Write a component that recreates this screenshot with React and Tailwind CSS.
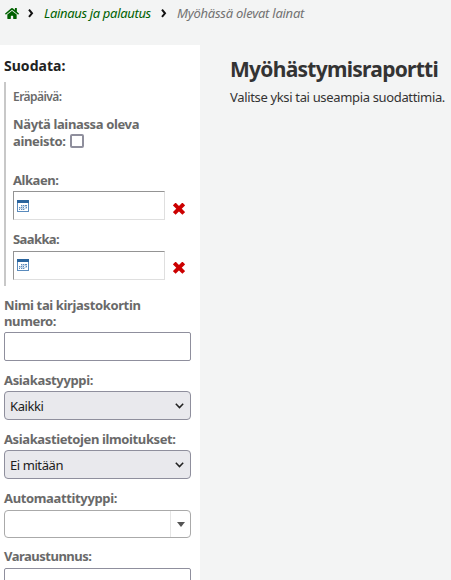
import React from "react";
import { FaHome } from "react-icons/fa";

function Crumb() {
  return (
    <svg className="h-[9px] w-[6px] shrink-0" viewBox="0 0 6 9">
      <path d="M1 .7 4 4.3 1 7.9" fill="none" stroke="#111" strokeWidth="2" />
    </svg>
  );
}

function CalendarIcon() {
  return (
    <svg className="h-3 w-3" viewBox="0 0 12 12" shapeRendering="crispEdges">
      <rect width="12" height="12" rx="1" fill="#5a8bbd" />
      <rect width="12" height="3" fill="#2a649d" />
      <rect x="1" y="3" width="10" height="8" fill="#fff" />
      <path d="M4 5h1v1H4zM6 5h1v1H6zM8 5h2v1H8zM2 7h1v1H2zM4 7h1v1H4zM6 7h1v1H6zM9 7h1v1H9zM2 9h1v1H2zM4 9h1v1H4zM6 9h1v1H6z" fill="#5c8abb" />
      <path d="M5 5h1v1H5zM7 5h1v1H7zM4 6h6v1H4zM3 7h1v1H3zM5 7h1v1H5zM8 7h1v1H8zM2 8h8v1H2zM5 9h1v1H5zM7 9h1v1H7z" fill="#c3d5e7" />
    </svg>
  );
}

function ClearIcon() {
  return (
    <svg className="h-[12px] w-[12px]" viewBox="0 0 12 12">
      <path d="M2.6 2.3 9.4 9.1M9.4 2.3 2.6 9.1" fill="none" stroke="#cc0000" strokeWidth="3.9" strokeLinecap="square" strokeLinejoin="round" />
    </svg>
  );
}

function DateField({ children }) {
  return (
    <div className="flex h-[29px]">
      <div className="h-[29px] w-[152px] border border-t-[#949494] border-r-[#dfdfdf] border-b-[#dfdfdf] border-l-[#949494] bg-white pl-[3px]">
        {children}
      </div>
    </div>
  );
}

function Select({ children }) {
  return (
    <div className="flex h-[29px] w-[187px] items-center justify-between rounded-[4px] border border-[#8f8f9d] bg-[#e9e9ed] pr-[6px] pl-[5px] font-normal tracking-[-0.42px] text-[#202020]">
      {children}
      <svg className="h-[6px] w-[9px]" viewBox="0 0 9 6">
        <path d="M.8.8 4.5 4.6 8.2.8" fill="none" stroke="#222" strokeWidth="1.5" />
      </svg>
    </div>
  );
}

export default function App() {
  return (
    <div className="h-[580px] w-[451px] overflow-hidden bg-[#f3f4f4] font-['Noto_Sans',sans-serif] text-[13px] leading-[18px] whitespace-nowrap text-[#333]">
      <nav className="flex h-[45px] items-start pt-[4px] pl-[5px] italic">
        <div className="flex h-[18px] items-center">
          <FaHome className="h-[13px] w-[14px] text-[#006100]" />
          <span className="ml-[9px] flex"><Crumb /></span>
          <span className="ml-[10px] w-[108px] tracking-[-0.33px] text-[#006100]">Lainaus ja palautus</span>
          <span className="ml-[9px] flex"><Crumb /></span>
          <span className="ml-[10px] tracking-[-0.25px] text-[#727272]">Myöhässä olevat lainat</span>
        </div>
      </nav>
      <div className="flex h-[535px]">
        <aside className="w-[200px] shrink-0 overflow-hidden bg-white pl-[4px] font-bold tracking-[-0.36px] text-[#696969]">
          <h4 className="h-[37px] pt-[12px] text-[14px] tracking-[0.03px] text-[#222]">Suodata:</h4>
          <div className="h-[204px] border-l-2 border-[#c8c8c8] pl-[7px]">
            <div className="h-[33px] pt-[6px] text-[12px] font-semibold tracking-[-0.55px]">Eräpäivä:</div>
            <div className="h-[56px]">
              <div className="h-[17px]">Näytä lainassa oleva</div>
              <div className="flex items-center">
                <span className="w-[57px]">aineisto:</span>
                <span className="h-[14px] w-[14px] rounded-[2px] border-2 border-[#8f8f9d] bg-white" />
              </div>
            </div>
            <div className="h-[20px] tracking-[-0.45px]">Alkaen:</div>
            <div className="flex">
              <DateField><div className="pt-[8px]"><CalendarIcon /></div></DateField>
              <div className="pt-[12px] pl-[8px]"><ClearIcon /></div>
            </div>
            <div className="h-[31px] pt-[10px] tracking-[-0.6px]">Saakka:</div>
            <div className="flex">
              <DateField><div className="pt-[7px]"><CalendarIcon /></div></DateField>
              <div className="pt-[11px] pl-[8px]"><ClearIcon /></div>
            </div>
          </div>
          <div className="h-[46px] pt-[11px] leading-[16px]">Nimi tai kirjastokortin<br />numero:</div>
          <div className="h-[29px] w-[187px] rounded-[2px] border border-[#8f8f9d]" />
          <div className="h-[30px] pt-[10px]">Asiakastyyppi:</div>
          <Select>Kaikki</Select>
          <div className="h-[30px] pt-[10px] tracking-[-0.38px]">Asiakastietojen ilmoitukset:</div>
          <Select>Ei mitään</Select>
          <div className="h-[31px] pt-[10px]">Automaattityyppi:</div>
          <div className="flex h-[28px] w-[187px] justify-end rounded-[4px] border border-[#aaa]">
            <div className="flex w-[20px] items-center justify-center border-l border-[#e5e5e5]">
              <svg className="h-[5px] w-[8px]" viewBox="0 0 8 5"><path d="M0 0h8L4 5z" fill="#555" /></svg>
            </div>
          </div>
          <div className="h-[30px] pt-[9px] tracking-[-0.5px]">Varaustunnus:</div>
          <div className="h-[29px] w-[187px] rounded-[2px] border border-[#8f8f9d]" />
        </aside>
        <main className="pt-[9px] pl-[30px]">
          <h1 className="text-[21px] leading-[30px] font-bold tracking-[-0.73px]">Myöhästymisraportti</h1>
          <p className="mt-[4px] tracking-[-0.34px]">Valitse yksi tai useampia suodattimia.</p>
        </main>
      </div>
    </div>
  );
}
